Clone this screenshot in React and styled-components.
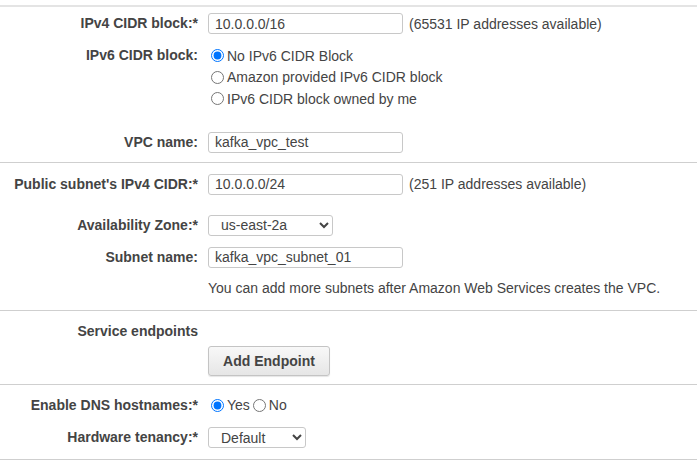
import React from "react";
import styled, { createGlobalStyle } from "styled-components";

const GlobalStyle = createGlobalStyle`
  body {
    margin: 0;
    background: #fff;
    font-family: "Liberation Sans", Arial, sans-serif;
    font-size: 14px;
    color: #444;
  }
`;

const Page = styled.div`
  width: 697px;
  padding-top: 5px;
`;

const Section = styled.div`
  border-top: ${(p) => (p.$first ? "2px solid #e4e4e4" : "1px solid #cfcfcf")};
  padding: ${(p) => p.$pad};
`;

const Row = styled.div`
  display: flex;
  align-items: ${(p) => (p.$top ? "flex-start" : "center")};
  margin-top: ${(p) => p.$gap || 0}px;
  min-height: 21px;
`;

const Label = styled.div`
  width: 198px;
  flex: none;
  text-align: right;
  font-weight: bold;
  color: #444;
  line-height: 21px;
  padding-right: 10px;
`;

const Field = styled.div`
  display: flex;
  align-items: center;
  gap: 6px;
`;

const TextInput = styled.input`
  box-sizing: border-box;
  width: 195px;
  height: 21px;
  border: 1px solid #c8c8c8;
  border-radius: 3px;
  padding: 0 6px;
  font: 14px "Liberation Sans", Arial, sans-serif;
  color: #444;
  outline: none;
`;

const Note = styled.span`
  color: #444;
`;

const Select = styled.select`
  box-sizing: border-box;
  width: ${(p) => p.$w}px;
  height: 21px;
  border: 1px solid #c8c8c8;
  border-radius: 3px;
  background: #fff;
  padding: 0 0 0 8px;
  font: 14px "Liberation Sans", Arial, sans-serif;
  color: #444;
`;

const RadioList = styled.div`
  display: flex;
  flex-direction: column;
`;

const RadioInline = styled.div`
  display: flex;
  align-items: center;
`;

const RadioLabel = styled.label`
  display: flex;
  align-items: center;
  height: 21.5px;
  color: #444;
  white-space: nowrap;
`;

const Radio = styled.input.attrs({ type: "radio" })`
  width: 13px;
  height: 13px;
  margin: 0 3px 0 3px;
`;

const Help = styled.div`
  margin-left: 208px;
  margin-top: ${(p) => p.$gap}px;
  line-height: 18px;
  color: #444;
`;

const Button = styled.button`
  box-sizing: border-box;
  width: 122px;
  height: 30px;
  border: 1px solid #c4c4c4;
  border-radius: 3px;
  background: linear-gradient(#f8f8f8, #e6e6e6);
  font: bold 14px "Liberation Sans", Arial, sans-serif;
  color: #444;
  box-shadow: 0 1px 1px rgba(0, 0, 0, 0.1);
`;

const Spacer = styled.div`
  width: 208px;
  flex: none;
`;

export default function App() {
  return (
    <Page>
      <GlobalStyle />
      <Section $first $pad="6px 0 9px">
        <Row>
          <Label>IPv4 CIDR block:*</Label>
          <Field>
            <TextInput defaultValue="10.0.0.0/16" />
            <Note>(65531 IP addresses available)</Note>
          </Field>
        </Row>
        <Row $top $gap={11}>
          <Label>IPv6 CIDR block:</Label>
          <RadioList>
            <RadioLabel>
              <Radio name="ipv6" defaultChecked />
              No IPv6 CIDR Block
            </RadioLabel>
            <RadioLabel>
              <Radio name="ipv6" />
              Amazon provided IPv6 CIDR block
            </RadioLabel>
            <RadioLabel>
              <Radio name="ipv6" />
              IPv6 CIDR block owned by me
            </RadioLabel>
          </RadioList>
        </Row>
        <Row $gap={22}>
          <Label>VPC name:</Label>
          <Field>
            <TextInput defaultValue="kafka_vpc_test" />
          </Field>
        </Row>
      </Section>

      <Section $pad="11px 0 13px">
        <Row>
          <Label>Public subnet's IPv4 CIDR:*</Label>
          <Field>
            <TextInput defaultValue="10.0.0.0/24" />
            <Note>(251 IP addresses available)</Note>
          </Field>
        </Row>
        <Row $gap={20}>
          <Label>Availability Zone:*</Label>
          <Select $w={125} defaultValue="us-east-2a">
            <option>us-east-2a</option>
            <option>us-east-2b</option>
            <option>us-east-2c</option>
          </Select>
        </Row>
        <Row $gap={11}>
          <Label>Subnet name:</Label>
          <Field>
            <TextInput defaultValue="kafka_vpc_subnet_01" />
          </Field>
        </Row>
        <Help $gap={11}>You can add more subnets after Amazon Web Services creates the VPC.</Help>
      </Section>

      <Section $pad="10px 0 8px">
        <Row>
          <Label>Service endpoints</Label>
        </Row>
        <Row $gap={4}>
          <Spacer />
          <Button>Add Endpoint</Button>
        </Row>
      </Section>

      <Section $pad="10px 0 11px">
        <Row>
          <Label>Enable DNS hostnames:*</Label>
          <RadioInline>
            <RadioLabel>
              <Radio name="dns" defaultChecked />
              Yes
            </RadioLabel>
            <RadioLabel>
              <Radio name="dns" />
              No
            </RadioLabel>
          </RadioInline>
        </Row>
        <Row $gap={11}>
          <Label>Hardware tenancy:*</Label>
          <Select $w={98} defaultValue="Default">
            <option>Default</option>
            <option>Dedicated</option>
          </Select>
        </Row>
      </Section>
      <Section />
    </Page>
  );
}
